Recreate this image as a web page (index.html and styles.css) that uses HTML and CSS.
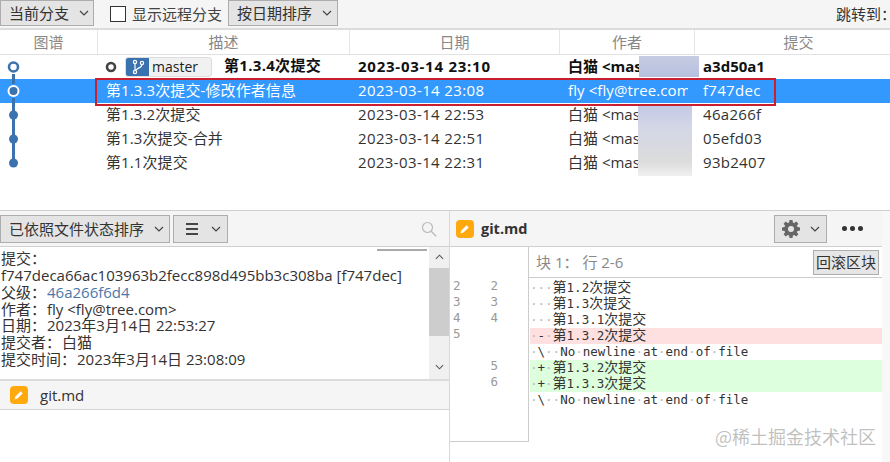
FILE: index.html
```html
<!DOCTYPE html>
<html lang="zh">
<head>
<meta charset="utf-8">
<title>SourceTree</title>
<link rel="stylesheet" href="styles.css">
</head>
<body>
<svg class="defs" width="0" height="0">
  <defs>
    <symbol id="chev" viewBox="0 0 10 6"><path d="M1 1l4 4 4-4" fill="none" stroke="#444" stroke-width="1.2"/></symbol>
    <symbol id="edit" viewBox="0 0 18 18"><rect width="18" height="18" rx="4" fill="#ffa90f"/><path d="M4.500 13.500l.9-3 5.200-5.200 2.100 2.100-5.200 5.200z" fill="#fff"/></symbol>
  </defs>
</svg>
<div class="top">
  <div class="toolbar">
    <button class="btn branch-btn">当前分支<svg class="chev"><use href="#chev"/></svg></button>
    <label class="check"><span class="box"></span>显示远程分支</label>
    <button class="btn sort-btn">按日期排序<svg class="chev"><use href="#chev"/></svg></button>
    <span class="jump">跳转到<span class="fw">：</span></span>
  </div>
  <div class="row head">
    <div class="c-graph">图谱</div><div class="c-desc">描述</div><div class="c-date">日期</div><div class="c-author">作者</div><div class="c-hash">提交</div>
  </div>
  <div class="list">
    <div class="row commit bold">
      <div class="c-graph"><svg width="27" height="24"><path d="M13.500 19V24" stroke="#3c72ad" stroke-width="3"/><circle cx="13.500" cy="12" r="4.500" fill="#fff" stroke="#3c72ad" stroke-width="2.600"/></svg></div>
      <div class="c-desc">
        <svg class="head-mark" width="12" height="12"><circle cx="6" cy="6" r="4" fill="#fff" stroke="#444" stroke-width="2.600"/></svg>
        <span class="tag"><span class="tag-icon"><svg width="16" height="16" viewBox="0 0 16 16"><g fill="none" stroke="#fff" stroke-width="1.200"><circle cx="5" cy="3" r="1.600"/><circle cx="5" cy="13" r="1.600"/><circle cx="12" cy="4" r="1.600"/><path d="M5 4.600v6.800M12 5.600c0 3-4 3-6 5.400"/></g></svg></span><span class="tag-name">master</span></span>
        <span class="subject">第1.3.4次提交</span>
      </div>
      <div class="c-date">2023-03-14 23:10</div><div class="c-author">白猫 &lt;mas</div><div class="c-hash">a3d50a1</div>
    </div>
    <div class="row commit selected">
      <div class="c-graph"><svg width="27" height="24"><path d="M13.500 0V5M13.500 19V24" stroke="#3c72ad" stroke-width="3"/><circle cx="13.500" cy="12" r="5" fill="#3c72ad" stroke="#fff" stroke-width="2"/></svg></div>
      <div class="c-desc">第1.3.3次提交-修改作者信息</div><div class="c-date">2023-03-14 23:08</div><div class="c-author"><span class="clip">fly &lt;fly@tree.com&gt;</span></div><div class="c-hash">f747dec</div>
    </div>
    <div class="row commit">
      <div class="c-graph"><svg width="27" height="24"><path d="M13.500 0V24" stroke="#3c72ad" stroke-width="3"/><circle cx="13.500" cy="12" r="4.500" fill="#3c72ad"/></svg></div>
      <div class="c-desc">第1.3.2次提交</div><div class="c-date">2023-03-14 22:53</div><div class="c-author">白猫 &lt;mas</div><div class="c-hash">46a266f</div>
    </div>
    <div class="row commit">
      <div class="c-graph"><svg width="27" height="24"><path d="M13.500 0V24" stroke="#3c72ad" stroke-width="3"/><circle cx="13.500" cy="12" r="4.500" fill="#3c72ad"/></svg></div>
      <div class="c-desc">第1.3次提交-合并</div><div class="c-date">2023-03-14 22:51</div><div class="c-author">白猫 &lt;mas</div><div class="c-hash">05efd03</div>
    </div>
    <div class="row commit">
      <div class="c-graph"><svg width="27" height="24"><path d="M13.500 0V12" stroke="#3c72ad" stroke-width="3"/><circle cx="13.500" cy="12" r="4.500" fill="#3c72ad"/></svg></div>
      <div class="c-desc">第1.1次提交</div><div class="c-date">2023-03-14 22:31</div><div class="c-author">白猫 &lt;mas</div><div class="c-hash">93b2407</div>
    </div>
    <div class="blur blur-a"></div>
    <div class="blur blur-b"></div>
    <div class="marker"></div>
  </div>
</div>
<div class="bottom">
  <div class="left">
    <div class="pane-bar">
      <button class="btn status-btn">已依照文件状态排序<svg class="chev"><use href="#chev"/></svg></button>
      <button class="btn menu-btn"><svg class="burger" width="12" height="12" viewBox="0 0 12 12"><path d="M0 1h12M0 6h12M0 11h12" stroke="#111" stroke-width="1.500"/></svg><svg class="chev"><use href="#chev"/></svg></button>
      <svg class="search" width="16" height="16" viewBox="0 0 16 16"><circle cx="6.500" cy="6.500" r="5" fill="none" stroke="#bbb" stroke-width="1.200"/><path d="M10.200 10.200l5 5" stroke="#bbb" stroke-width="1.400"/></svg>
    </div>
    <div class="details">
      <div class="info">
        <span class="tick"></span>
        <div>提交<span class="fw">：</span></div>
        <div>f747deca66ac103963b2fecc898d495bb3c308ba [f747dec]</div>
        <div>父级<span class="fw">：</span><span class="link">46a266f6d4</span></div>
        <div>作者<span class="fw">：</span>fly &lt;fly@tree.com&gt;</div>
        <div>日期<span class="fw">：</span>2023年3月14日 22:53:27</div>
        <div>提交者<span class="fw">：</span>白猫</div>
        <div>提交时间<span class="fw">：</span>2023年3月14日 23:08:09</div>
      </div>
      <div class="scroll">
        <svg class="arrow" width="9" height="6" viewBox="0 0 10 6"><path d="M1 5l4-4 4 4" fill="none" stroke="#555" stroke-width="1.200"/></svg>
        <div class="thumb"></div>
        <svg class="arrow arrow-down" width="9" height="6" viewBox="0 0 10 6"><path d="M1 1l4 4 4-4" fill="none" stroke="#555" stroke-width="1.200"/></svg>
      </div>
    </div>
    <div class="file-row"><svg class="edit" width="18" height="18"><use href="#edit"/></svg><span>git.md</span></div>
    <div class="empty"></div>
  </div>
  <div class="right">
    <div class="diff-main">
      <div class="pane-bar diff-bar">
        <svg class="edit" width="18" height="18"><use href="#edit"/></svg>
        <span class="diff-file">git.md</span>
        <button class="btn gear-btn">
          <svg width="18" height="18" viewBox="0 0 18 18"><path fill="#666" fill-rule="evenodd" d="M7.500 0h3l.4 2.500 1.400.6 2-1.500 2.100 2.100-1.500 2 .6 1.400 2.500.4v3l-2.500.4-.6 1.400 1.500 2-2.100 2.100-2-1.500-1.400.6-.4 2.500h-3l-.4-2.500-1.400-.6-2 1.500-2.100-2.100 1.500-2-.6-1.400L0 10.500v-3l2.500-.4.6-1.400-1.500-2 2.100-2.100 2 1.500 1.400-.6zM9 6a3 3 0 1 0 0 6 3 3 0 0 0 0-6z"/></svg>
          <svg class="chev"><use href="#chev"/></svg>
        </button>
        <span class="more"><i></i><i></i><i></i></span>
      </div>
      <div class="diff">
        <div class="gutter">
          <div class="gut-row"><span>2</span><span>2</span></div>
          <div class="gut-row"><span>3</span><span>3</span></div>
          <div class="gut-row"><span>4</span><span>4</span></div>
          <div class="gut-row"><span>5</span><span></span></div>
          <div class="gut-row"><span></span><span></span></div>
          <div class="gut-row"><span></span><span>5</span></div>
          <div class="gut-row"><span></span><span>6</span></div>
        </div>
        <div class="code">
          <div class="hunk"><span>块 1<span class="fw">：</span> 行 2-6</span><button class="btn revert">回滚区块</button></div>
          <div class="lines">
            <div class="ln"><i>···</i><b>第</b>1.2<b>次提交</b></div>
            <div class="ln"><i>···</i><b>第</b>1.3<b>次提交</b></div>
            <div class="ln"><i>···</i><b>第</b>1.3.1<b>次提交</b></div>
            <div class="ln del"><i>·</i>-<i>·</i><b>第</b>1.3.2<b>次提交</b></div>
            <div class="ln"><i>·</i>\<i>··</i>No<i>·</i>newline<i>·</i>at<i>·</i>end<i>·</i>of<i>·</i>file</div>
            <div class="ln add"><i>·</i>+<i>·</i><b>第</b>1.3.2<b>次提交</b></div>
            <div class="ln add"><i>·</i>+<i>·</i><b>第</b>1.3.3<b>次提交</b></div>
            <div class="ln"><i>·</i>\<i>··</i>No<i>·</i>newline<i>·</i>at<i>·</i>end<i>·</i>of<i>·</i>file</div>
          </div>
        </div>
      </div>
    </div>
    <div class="strip"></div>
    <div class="watermark">@稀土掘金技术社区</div>
  </div>
</div>
</body>
</html>
```

FILE: styles.css
```css
* { box-sizing: border-box; }
html, body { margin: 0; height: 100%; }
body {
  width: 890px;
  height: 462px;
  overflow: hidden;
  background: #fff;
  color: #333;
  font: 15px/20px "Open Sans", "Noto Sans CJK SC", sans-serif;
  display: flex;
  flex-direction: column;
}
.defs { position: absolute; }
.fw { font-family: "Noto Sans CJK TC", sans-serif; }
.top { height: 210px; flex: none; }
.toolbar {
  height: 30px;
  background: #f5f5f5;
  border-bottom: 2px solid #dcdcdc;
  display: flex;
  align-items: flex-start;
}
.btn {
  font: inherit;
  color: #333;
  background: #e4e4e4;
  border: 1px solid #adadad;
  padding: 0;
  display: flex;
  align-items: center;
}
.chev { width: 10px; height: 6px; }
.branch-btn { width: 94px; height: 26px; padding-left: 8px; gap: 10px; }
.check { display: flex; align-items: center; gap: 6px; margin: 4px 0 0 16px; width: 118px; color: #444; }
.box { width: 16px; height: 16px; background: #fff; border: 1px solid #333; }
.sort-btn { width: 110px; height: 26px; padding-left: 8px; gap: 10px; }
.jump { margin: 4px 0 0 auto; width: 54px; white-space: nowrap; }
.row { display: flex; }
.c-graph { width: 98px; flex: none; }
.c-desc { width: 252px; flex: none; padding-left: 8px; }
.c-date { width: 210px; flex: none; padding-left: 8px; }
.c-author { width: 135px; flex: none; padding-left: 8px; }
.c-hash { flex: 1; padding-left: 8px; }
.head {
  height: 25px;
  color: #888;
  border-bottom: 1px solid #e2e2e2;
  line-height: 25px;
  text-align: center;
}
.head > div { padding: 0; border-right: 1px solid #e6e6e6; }
.head > div:last-child { border-right: 0; padding-left: 12px; }
.list { position: relative; }
.commit { height: 24px; line-height: 23px; white-space: nowrap; }
.commit .c-graph svg { display: block; }
.commit .c-desc { letter-spacing: .1px; }
.commit .c-date { letter-spacing: .38px; }
.commit .c-hash { letter-spacing: .3px; }
.bold { font-weight: 700; color: #111; }
.bold .c-date { letter-spacing: .75px; }
.bold .c-hash { letter-spacing: 0; }
.selected { background: #3399ff; color: #fff; }
.clip { display: block; width: 120px; overflow: hidden; letter-spacing: .1px; }
.bold .c-desc { display: flex; align-items: center; padding-left: 7px; font-weight: 700; }
.head-mark { flex: none; }
.tag {
  display: flex;
  width: 87px;
  height: 20px;
  margin-left: 8px;
  background: #f1f1f1;
  border: 1px solid #ddd;
  border-radius: 3px;
  font-weight: 400;
  overflow: hidden;
}
.tag-icon { width: 23px; background: #3a72b0; display: flex; align-items: center; justify-content: center; }
.tag-name { padding-left: 3px; font-size: 14px; line-height: 18px; color: #222; letter-spacing: 0; }
.subject { margin-left: 12px; line-height: 16px; margin-top: -5px; letter-spacing: .3px; }
.blur { position: absolute; }
.blur-a { left: 639px; top: 1px; width: 60px; height: 21px; background: linear-gradient(#c6cce2, #b6c0de); }
.blur-b { left: 638px; top: 49px; width: 54px; height: 72px; background: linear-gradient(#c2c8e6, #d3d6e6 30%, #dcdcdc 80%, #f0f0f0); }
.marker { position: absolute; left: 95px; top: 23px; width: 681px; height: 28px; border: 2px solid #c8202f; }
.bottom { flex: 1; display: flex; border-top: 1px solid #d0d0d0; }
.left { width: 450px; flex: none; display: flex; flex-direction: column; border-right: 1px solid #d8d8d8; }
.pane-bar {
  height: 36px;
  flex: none;
  display: flex;
  align-items: center;
  background: #f5f5f5;
  border-bottom: 1px solid #d0d0d0;
}
.status-btn { width: 170px; height: 28px; padding-left: 8px; gap: 10px; }
.menu-btn { width: 55px; height: 28px; margin-left: 3px; padding-left: 12px; gap: 13px; }
.search { margin-left: auto; margin-right: 12px; }
.details { height: 132px; flex: none; display: flex; }
.info { flex: 1; position: relative; line-height: 16.85px; padding: 3px 0 0 1px; white-space: nowrap; }
.info .fw { margin-right: 1px; }
.tick { position: absolute; left: 377px; top: 2px; width: 50px; height: 2px; background: #aaa; }
.link { color: #4a78aa; }
.scroll { width: 20px; background: #f0f0f0; display: flex; flex-direction: column; align-items: center; }
.arrow { margin-top: 7px; }
.thumb { align-self: stretch; height: 68px; margin-top: 8px; background: #cdcdcd; }
.arrow-down { margin-top: 28px; }
.file-row {
  height: 31px;
  flex: none;
  background: #f5f5f5;
  border-top: 2px solid #dcdcdc;
  border-bottom: 1px solid #d5d5d5;
  display: flex;
  align-items: center;
  padding-left: 10px;
  gap: 12px;
}
.empty { flex: 1; }
.right { flex: 1; display: flex; position: relative; }
.diff-main { width: 432px; display: flex; flex-direction: column; }
.strip { flex: 1; background: #f8f8f8; }
.diff-bar { padding-left: 6px; }
.diff-file { font-weight: 700; font-size: 14.5px; margin-left: 7px; color: #333; }
.gear-btn { width: 53px; height: 28px; margin-left: auto; padding-left: 7px; gap: 10px; }
.more { display: flex; gap: 3px; margin: 0 19px 0 15px; }
.more i { width: 5px; height: 5px; border-radius: 50%; background: #333; }
.diff { display: flex; flex: none; height: 195px; }
.gutter {
  width: 79px;
  flex: none;
  padding-top: 31px;
  border-right: 1px solid #ccc;
  border-bottom: 1px solid #ccc;
  font: 12.5px/16px "DejaVu Sans Mono", monospace;
  color: #999;
}
.gut-row { height: 16px; display: flex; padding-left: 3px; }
.gut-row span { width: 38px; }
.code { flex: 1; }
.hunk {
  height: 31px;
  border-bottom: 1px solid #ccc;
  display: flex;
  align-items: center;
  justify-content: space-between;
  padding: 0 3px 0 7px;
  color: #888;
}
.revert { width: 66px; height: 25px; justify-content: center; background: #e6e6e6; }
.lines { padding: 2px 0 0 1px; font: 12.5px/15px "DejaVu Sans Mono", monospace; color: #333; }
.ln { height: 16px; white-space: pre; }
.ln i { font-style: normal; color: #bbb; }
.ln b { font: 400 14px/13px "Noto Sans CJK SC", sans-serif; }
.del { background: #ffe0e0; }
.add { background: #ddffdd; }
.watermark {
  position: absolute;
  left: 265px;
  top: 213px;
  font: 18px/24px "Noto Sans CJK SC", sans-serif;
  color: rgba(130, 130, 130, .5);
  white-space: nowrap;
}
```
